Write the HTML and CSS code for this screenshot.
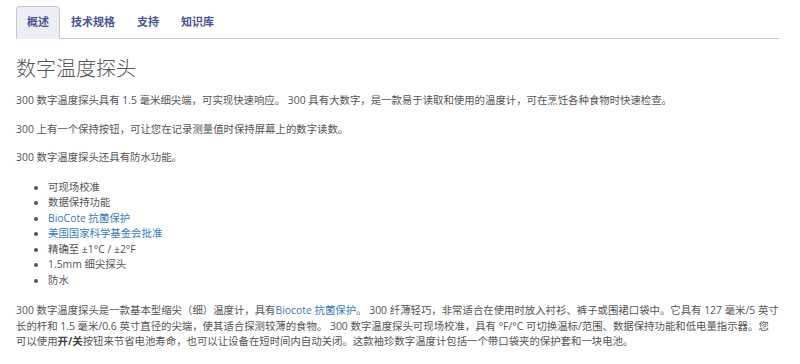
FILE: index.html
```html
<!DOCTYPE html>
<html lang="zh-CN">
<head>
    <meta charset="UTF-8">
    <meta name="viewport" content="width=device-width, initial-scale=1.0">
    <title>数字温度探头</title>
    <link rel="stylesheet" href="styles.css">
</head>
<body>
    <div class="page">
        <ul class="tabs">
            <li class="tab active"><a href="#">概述</a></li>
            <li class="tab"><a href="#">技术规格</a></li>
            <li class="tab"><a href="#">支持</a></li>
            <li class="tab"><a href="#">知识库</a></li>
        </ul>

        <div class="tab-content">
            <h1>数字温度探头</h1>
            <p>300 数字温度探头具有 1.5 毫米细尖端，可实现快速响应。 300 具有大数字，是一款易于读取和使用的温度计，可在烹饪各种食物时快速检查。</p>
            <p>300 上有一个保持按钮，可让您在记录测量值时保持屏幕上的数字读数。</p>
            <p>300 数字温度探头还具有防水功能。</p>
            <ul class="features">
                <li>可现场校准</li>
                <li>数据保持功能</li>
                <li><a href="#">BioCote 抗菌保护</a></li>
                <li><a href="#">美国国家科学基金会批准</a></li>
                <li>精确至 ±1°C / ±2°F</li>
                <li>1.5mm 细尖探头</li>
                <li>防水</li>
            </ul>
            <p>300 数字温度探头是一款基本型缩尖（细）温度计，具有<a href="#">Biocote 抗菌保护</a>。 300 纤薄轻巧，非常适合在使用时放入衬衫、裤子或围裙口袋中。它具有 127 毫米/5 英寸长的杆和 1.5 毫米/0.6 英寸直径的尖端，使其适合探测较薄的食物。 300 数字温度探头可现场校准，具有 °F/°C 可切换温标/范围、数据保持功能和低电量指示器。您可以使用<strong>开/关</strong>按钮来节省电池寿命，也可以让设备在短时间内自动关闭。这款袖珍数字温度计包括一个带口袋夹的保护套和一块电池。</p>
        </div>
    </div>
</body>
</html>
```

FILE: styles.css
```css
body {
    margin: 0;
    font-family: "Open Sans", "Noto Sans CJK SC", sans-serif;
    background-color: #fff;
    color: #555;
}

.page {
    padding: 6px 21px 0 16px;
}

/* Tabs */
.tabs {
    display: flex;
    list-style: none;
    margin: 0;
    padding: 0;
    border-bottom: 1px solid #c5c8d3;
}

.tab {
    margin-bottom: -1px;
}

.tab a {
    display: block;
    padding: 7px 10px 8px;
    font-size: 11px;
    line-height: 16px;
    font-weight: bold;
    color: #4a5592;
    text-decoration: none;
    border: 1px solid transparent;
    border-radius: 4px 4px 0 0;
}

.tab.active a {
    background-color: #eceef3;
    border-color: #c5c8d3;
    border-bottom-color: #eceef3;
}

/* Content */
.tab-content h1 {
    margin: 18px 0 12px;
    font-size: 20px;
    line-height: 24px;
    font-weight: 300;
    color: #555;
}

.tab-content p {
    margin: 0 0 13px;
    font-size: 10.4px;
    line-height: 15.6px;
}

.tab-content a {
    color: #3b7ab8;
    text-decoration: none;
}

.tab-content strong {
    color: #444;
}

.features {
    margin: 14px 0 15px;
    padding-left: 32px;
    font-size: 10.4px;
    line-height: 15.5px;
}
```
